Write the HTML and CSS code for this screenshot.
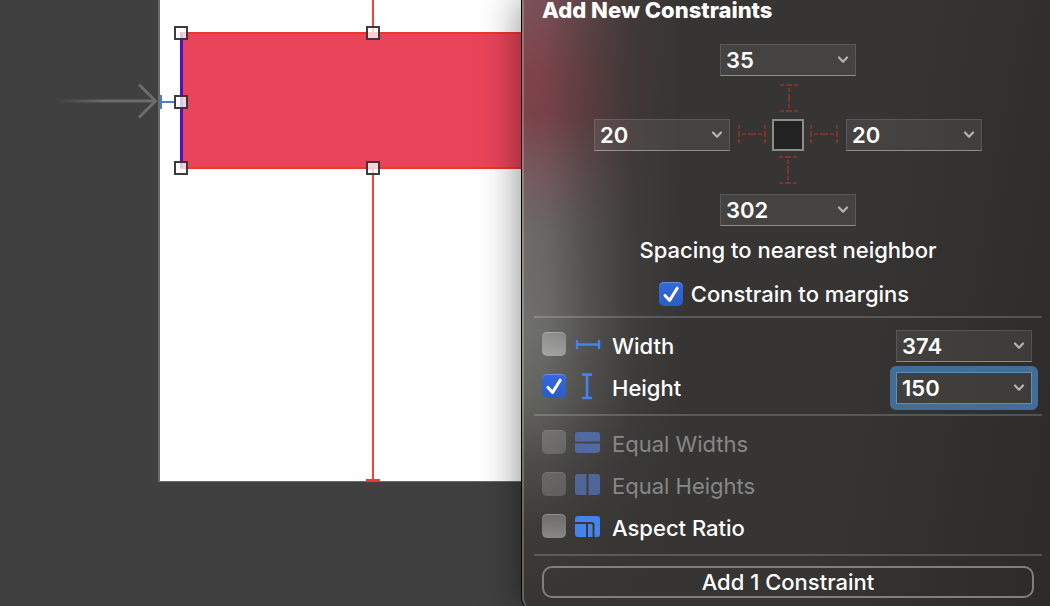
FILE: index.html
```html
<!DOCTYPE html>
<html lang="en">
<head>
  <meta charset="UTF-8">
  <meta name="viewport" content="width=device-width, initial-scale=1.0">
  <title>Add New Constraints</title>
  <link rel="stylesheet" href="styles.css">
</head>
<body>

  <!-- shared shapes -->
  <svg class="symbols" aria-hidden="true">
    <symbol id="chevron" viewBox="0 0 12 8">
      <path d="M2 1.5l4 4.2 4-4.2" fill="none" stroke="#b4b4b3" stroke-width="2.2" stroke-linecap="round" stroke-linejoin="round"/>
    </symbol>
    <symbol id="tick" viewBox="0 0 24 24">
      <path d="M6 13.4l4.6 5L18.2 6.2" fill="none" stroke="#fff" stroke-width="3" stroke-linecap="round" stroke-linejoin="round"/>
    </symbol>
  </svg>

  <div class="editor">
    <main class="canvas">
      <svg class="entry-arrow" viewBox="0 0 104 38">
        <defs>
          <linearGradient id="fade" x1="0" x2="1" y1="0" y2="0">
            <stop offset="0" stop-color="#6c6c6c" stop-opacity="0"/>
            <stop offset="0.5" stop-color="#6c6c6c"/>
          </linearGradient>
        </defs>
        <rect x="0" y="17.5" width="100" height="3" fill="url(#fade)"/>
        <path d="M83 2.5L99.5 19 83 35.5" fill="none" stroke="#6c6c6c" stroke-width="3"/>
      </svg>

      <div class="scene">
        <div class="guide guide-center"></div>
        <div class="guide-end"></div>
        <div class="view"></div>
        <div class="guide-leading"></div>
        <span class="handle at-left at-top"></span>
        <span class="handle at-left at-middle"></span>
        <span class="handle at-left at-bottom"></span>
        <span class="handle at-center at-top"></span>
        <span class="handle at-center at-bottom"></span>
      </div>
    </main>

    <form class="popover">
      <h1>Add New Constraints</h1>

      <div class="spacing">
        <span class="combo">
          <select aria-label="Top spacing"><option>35</option></select>
          <svg><use href="#chevron"/></svg>
        </span>
        <svg class="strut-v" viewBox="0 0 20 43">
          <path d="M2 9h18M2 35h18" stroke-dasharray="4 2 6 2 4"/>
          <path d="M11 12v20" stroke-dasharray="4 2 8 2 4"/>
        </svg>
        <div class="spacing-row">
          <span class="combo">
            <select aria-label="Leading spacing"><option>20</option></select>
            <svg><use href="#chevron"/></svg>
          </span>
          <svg class="strut-h" viewBox="0 0 42 32">
            <path d="M9 6v18M35 6v18" stroke-dasharray="4 2 6 2 4"/>
            <path d="M12 15h20" stroke-dasharray="4 2 8 2 4"/>
          </svg>
          <span class="target"></span>
          <svg class="strut-h" viewBox="0 0 42 32">
            <path d="M7 6v18M33 6v18" stroke-dasharray="4 2 6 2 4"/>
            <path d="M10 15h20" stroke-dasharray="4 2 8 2 4"/>
          </svg>
          <span class="combo">
            <select aria-label="Trailing spacing"><option>20</option></select>
            <svg><use href="#chevron"/></svg>
          </span>
        </div>
        <svg class="strut-v" viewBox="0 0 20 43">
          <path d="M1 6h18M1 32h18" stroke-dasharray="4 2 6 2 4"/>
          <path d="M10 9v20" stroke-dasharray="4 2 8 2 4"/>
        </svg>
        <span class="combo">
          <select aria-label="Bottom spacing"><option>302</option></select>
          <svg><use href="#chevron"/></svg>
        </span>
      </div>

      <p class="caption">Spacing to nearest neighbor</p>
      <div class="margins">
        <span class="check"><input type="checkbox" id="margins" checked><svg><use href="#tick"/></svg></span>
        <label for="margins">Constrain to margins</label>
      </div>

      <div class="group">
        <div class="row">
          <span class="check"><input type="checkbox" id="width"></span>
          <svg class="icon" viewBox="0 0 26 28">
            <path d="M2 11v7M24 11v7M2 14.5h22" fill="none" stroke="#4583ec" stroke-width="2.4" stroke-linecap="round"/>
          </svg>
          <label for="width">Width</label>
          <span class="combo">
            <select aria-label="Width value"><option>374</option></select>
            <svg><use href="#chevron"/></svg>
          </span>
        </div>
        <div class="row">
          <span class="check"><input type="checkbox" id="height" checked><svg><use href="#tick"/></svg></span>
          <svg class="icon" viewBox="0 0 26 28">
            <path d="M8 2.6h8M8 26h8M12 2.6V26" fill="none" stroke="#4583ec" stroke-width="2.6" stroke-linecap="round"/>
          </svg>
          <label for="height">Height</label>
          <span class="combo focused">
            <select aria-label="Height value"><option>150</option></select>
            <svg><use href="#chevron"/></svg>
          </span>
        </div>
      </div>

      <div class="group">
        <div class="row disabled">
          <span class="check"><input type="checkbox" id="equal-widths" disabled></span>
          <svg class="icon" viewBox="0 0 26 28">
            <path d="M0 13.5V7a3 3 0 0 1 3-3h19a3 3 0 0 1 3 3v6.500zM0 15.500h25V22a3 3 0 0 1-3 3H3a3 3 0 0 1-3-3z" fill="#526a9f"/>
          </svg>
          <label for="equal-widths">Equal Widths</label>
        </div>
        <div class="row disabled">
          <span class="check"><input type="checkbox" id="equal-heights" disabled></span>
          <svg class="icon" viewBox="0 0 26 28">
            <path d="M11.500 4H3a3 3 0 0 0-3 3v15a3 3 0 0 0 3 3h8.500zM13.500 4v21H22a3 3 0 0 0 3-3V7a3 3 0 0 0-3-3z" fill="#4f6699"/>
          </svg>
          <label for="equal-heights">Equal Heights</label>
        </div>
        <div class="row">
          <span class="check"><input type="checkbox" id="aspect"></span>
          <svg class="icon" viewBox="0 0 26 28">
            <path d="M0 10V7a3 3 0 0 1 3-3h19a3 3 0 0 1 3 3v15a3 3 0 0 1-3 3h-2.500V13a3 3 0 0 0-3-3z" fill="#4583ec"/>
            <path d="M0 12h11v13H3a3 3 0 0 1-3-3zM13 12h3a1.500 1.500 0 0 1 1.500 1.500V25H13z" fill="#4583ec"/>
          </svg>
          <label for="aspect">Aspect Ratio</label>
        </div>
      </div>

      <div class="actions">
        <button type="submit">Add 1 Constraint</button>
      </div>
    </form>
  </div>

</body>
</html>
```

FILE: styles.css
```css
* {
  box-sizing: border-box;
}
body {
  margin: 0;
  overflow: hidden;
  background: #404040;
  color: #fff;
  font: 500 22px/28px Inter, "Liberation Sans", sans-serif;
}
.symbols {
  display: none;
}
.editor {
  display: grid;
  grid-template-columns: minmax(0, 522fr) minmax(500px, 528fr);
  min-height: 100vh;
}

/* canvas */
.canvas {
  position: relative;
  overflow: hidden;
}
.entry-arrow {
  position: absolute;
  left: 56px;
  top: 82px;
  width: 104px;
  height: 38px;
}
.scene {
  position: absolute;
  left: 158px;
  right: 0;
  top: 0;
  height: 482px;
  background: #fff;
  border-left: 2px solid #6a6a6a;
  border-bottom: 1px solid #6a6a6a;
}
.view {
  position: absolute;
  left: 20px;
  right: 0;
  top: 32px;
  height: 137px;
  background: #ea445a;
  border: 2px solid #ee3530;
  border-left: 3px solid #4d12b8;
  border-right: 0;
}
.guide {
  position: absolute;
  background: #f04438;
}
.guide-center {
  left: 212px;
  top: 0;
  bottom: 0;
  width: 2px;
}
.guide-end {
  position: absolute;
  left: 206px;
  bottom: 0;
  width: 14px;
  height: 2px;
  background: #f33a2e;
}
.guide-leading {
  position: absolute;
  left: 0;
  top: 95px;
  width: 16px;
  height: 14px;
  border-left: 2px solid #4a80c4;
  background: linear-gradient(#4a80c4, #4a80c4) center / 100% 2px no-repeat;
}
.handle {
  position: absolute;
  width: 14px;
  height: 14px;
  border: 2px solid rgba(30, 25, 27, 0.85);
  background: rgba(255, 255, 255, 0.76);
}
.at-left { left: 14px; }
.at-center { left: 206px; }
.at-top { top: 26px; }
.at-middle { top: 95px; }
.at-bottom { top: 161px; }

/* popover */
.popover {
  position: relative;
  padding: 0 8px 16px 10px;
  border-left: 2px solid rgba(255, 255, 255, 0.22);
  border-bottom-left-radius: 18px;
  box-shadow: 0 0 0 1px #000, 0 0 40px rgba(0, 0, 0, 0.5);
  background:
    linear-gradient(100deg, transparent 60%, #2c2b2a),
    linear-gradient(to right, rgba(54, 53, 51, 0), rgba(54, 53, 51, 0.08) 24px, rgba(54, 53, 51, 0.5) 66px, rgba(54, 53, 51, 0.85) 110px, #363533 160px),
    linear-gradient(#7d5159, #80444b 70px, #7c434a 115px, #775b5f 175px, #6d6a69 230px, #70706e 330px, #64645f 400px, #4d4c4a 465px, #3c3b39 530px, #363533 606px);
  background-origin: border-box;
}
h1 {
  margin: 0 8px 24px;
  font-size: 22px;
  line-height: 20px;
  font-weight: 800;
}
.spacing {
  display: flex;
  flex-direction: column;
  align-items: center;
}
.spacing-row {
  display: flex;
}
.combo {
  position: relative;
  width: 136px;
  height: 32px;
}
.combo select {
  appearance: none;
  display: block;
  width: 100%;
  height: 100%;
  margin: 0;
  padding: 0 28px 0 5px;
  border: 1px solid rgba(255, 255, 255, 0.12);
  border-bottom-color: rgba(255, 255, 255, 0.4);
  border-radius: 0;
  outline: none;
  background: rgba(255, 255, 255, 0.07);
  color: #fff;
  font: inherit;
  font-weight: 600;
}
.combo svg {
  position: absolute;
  right: 7px;
  top: 12px;
  width: 12px;
  height: 8px;
  pointer-events: none;
}
.focused::before {
  content: "";
  position: absolute;
  inset: -6px;
  border: 6px solid #416d96;
  border-radius: 6px;
}
.focused select {
  border-color: #5d8fbd;
}
.strut-v {
  width: 20px;
  height: 43px;
}
.strut-h {
  width: 42px;
  height: 32px;
}
.strut-v path,
.strut-h path {
  stroke: #7b352f;
  stroke-width: 2;
}
.target {
  width: 32px;
  height: 32px;
  border: 2px solid #8c8c8b;
  background: #222;
}
.caption {
  margin: 10px 0 16px;
  text-align: center;
}
.margins {
  display: flex;
  justify-content: center;
  align-items: center;
  gap: 8px;
  margin: 0 8px 8px 0;
}
.check {
  position: relative;
  width: 24px;
  height: 24px;
}
.check input {
  appearance: none;
  display: block;
  width: 24px;
  height: 24px;
  margin: 0;
  border-radius: 5px;
  background: linear-gradient(rgba(255, 255, 255, 0.24), rgba(255, 255, 255, 0.4));
  box-shadow: inset 0 1px rgba(255, 255, 255, 0.25);
}
.check input:checked {
  background: linear-gradient(#3369df, #2b5cc6);
}
.check input:disabled {
  background: rgba(255, 255, 255, 0.17);
  box-shadow: inset 0 1px rgba(255, 255, 255, 0.1);
}
.check svg {
  position: absolute;
  inset: 0;
  width: 24px;
  height: 24px;
  pointer-events: none;
}
.group {
  display: flex;
  flex-direction: column;
  gap: 10px;
  padding: 12px 10px 10px 8px;
  border-top: 2px solid rgba(255, 255, 255, 0.18);
}
.row {
  display: flex;
  align-items: center;
  height: 32px;
}
.row .check,
.row .icon {
  margin-bottom: 4px;
}
.row .combo {
  margin-left: auto;
}
.icon {
  width: 26px;
  height: 28px;
  margin: 0 11px 0 9px;
}
.disabled label {
  color: #878786;
  font-weight: 400;
}
.actions {
  padding: 10px 8px 0;
  border-top: 2px solid rgba(255, 255, 255, 0.18);
}
button {
  display: block;
  width: 100%;
  height: 32px;
  padding: 0;
  border: 2px solid #7f7f7d;
  border-radius: 10px;
  background: transparent;
  color: #fff;
  font: inherit;
}
```
